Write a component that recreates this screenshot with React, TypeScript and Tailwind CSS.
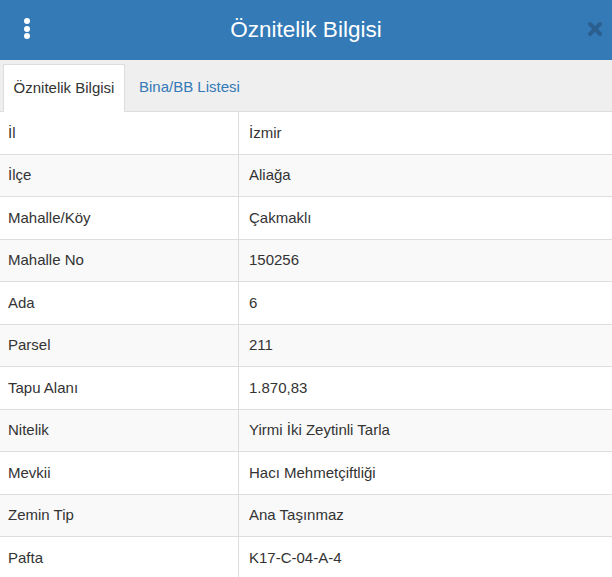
import React from 'react';

const rows: [string, string][] = [
  ['İl', 'İzmir'],
  ['İlçe', 'Aliağa'],
  ['Mahalle/Köy', 'Çakmaklı'],
  ['Mahalle No', '150256'],
  ['Ada', '6'],
  ['Parsel', '211'],
  ['Tapu Alanı', '1.870,83'],
  ['Nitelik', 'Yirmi İki Zeytinli Tarla'],
  ['Mevkii', 'Hacı Mehmetçiftliği'],
  ['Zemin Tip', 'Ana Taşınmaz'],
  ['Pafta', 'K17-C-04-A-4'],
];

export default function App() {
  return (
    <div className="w-[612px] h-[577px] overflow-hidden bg-white font-['Liberation_Sans',Arial,sans-serif] text-[#333]">
      {/* Header */}
      <div className="relative h-[60px] bg-[#337ab7] flex items-center justify-center">
        <div className="absolute left-[24px] top-[18px] flex flex-col gap-[1.5px]">
          <span className="block w-[6px] h-[6px] rounded-full bg-white" />
          <span className="block w-[6px] h-[6px] rounded-full bg-white" />
          <span className="block w-[6px] h-[6px] rounded-full bg-white" />
        </div>
        <h1 className="text-[22.5px] text-white leading-none">Öznitelik Bilgisi</h1>
        <svg className="absolute right-[9px] top-[21px]" width="16" height="16" viewBox="0 0 16 16">
          <path d="M3 3 L13 13 M13 3 L3 13" stroke="#2a5f8f" strokeWidth="4" strokeLinecap="round" />
        </svg>
      </div>

      {/* Tabs */}
      <div className="h-[52px] bg-[#efefef] border-b border-[#dddddd] flex items-end pl-[3px]">
        <div className="h-[48px] w-[122px] bg-white border border-b-0 border-[#dddddd] -mb-px flex items-center justify-center text-[15px]">
          Öznitelik Bilgisi
        </div>
        <div className="h-[48px] px-[14px] flex items-center text-[15px] text-[#337ab7]">
          Bina/BB Listesi
        </div>
      </div>

      {/* Table */}
      <div>
        {rows.map(([k, v], i) => (
          <div
            key={k}
            className={`flex h-[42.5px] border-b border-[#dddddd] text-[15px] ${i % 2 === 1 ? 'bg-[#f9f9f9]' : 'bg-white'}`}
          >
            <div className="w-[239px] shrink-0 border-r border-[#dddddd] pl-[8px] flex items-center">{k}</div>
            <div className="flex-1 pl-[10px] flex items-center">{v}</div>
          </div>
        ))}
      </div>
    </div>
  );
}
